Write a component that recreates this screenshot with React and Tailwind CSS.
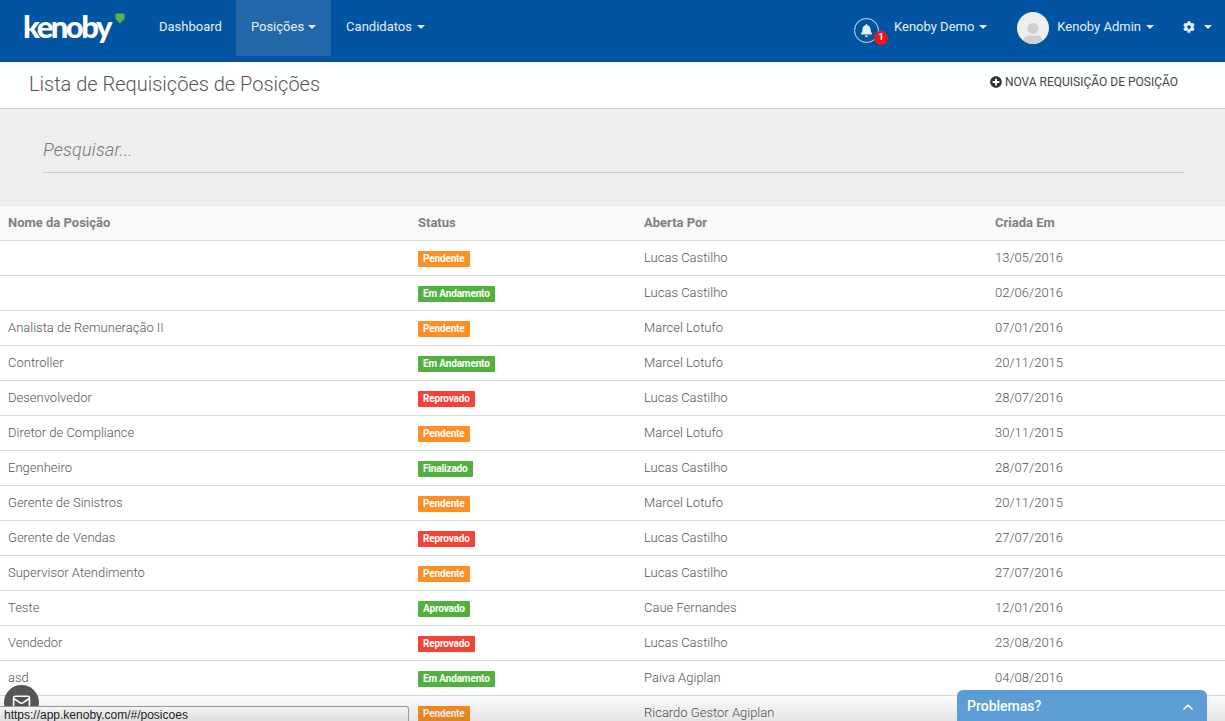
import { ChevronUp, Mail } from 'lucide-react';
import { FaBell, FaCog, FaPlusCircle, FaUser } from 'react-icons/fa';

const STATUS_STYLES = {
  Pendente: 'bg-[#fd8f25]',
  'Em Andamento': 'bg-[#52b03f]',
  Reprovado: 'bg-[#f44336]',
  Finalizado: 'bg-[#52b03f]',
  Aprovado: 'bg-[#52b03f]',
};

const ROWS = [
  ['', 'Pendente', 'Lucas Castilho', '13/05/2016'],
  ['', 'Em Andamento', 'Lucas Castilho', '02/06/2016'],
  ['Analista de Remuneração II', 'Pendente', 'Marcel Lotufo', '07/01/2016'],
  ['Controller', 'Em Andamento', 'Marcel Lotufo', '20/11/2015'],
  ['Desenvolvedor', 'Reprovado', 'Lucas Castilho', '28/07/2016'],
  ['Diretor de Compliance', 'Pendente', 'Marcel Lotufo', '30/11/2015'],
  ['Engenheiro', 'Finalizado', 'Lucas Castilho', '28/07/2016'],
  ['Gerente de Sinistros', 'Pendente', 'Marcel Lotufo', '20/11/2015'],
  ['Gerente de Vendas', 'Reprovado', 'Lucas Castilho', '27/07/2016'],
  ['Supervisor Atendimento', 'Pendente', 'Lucas Castilho', '27/07/2016'],
  ['Teste', 'Aprovado', 'Caue Fernandes', '12/01/2016'],
  ['Vendedor', 'Reprovado', 'Lucas Castilho', '23/08/2016'],
  ['asd', 'Em Andamento', 'Paiva Agiplan', '04/08/2016'],
  ['', 'Pendente', 'Ricardo Gestor Agiplan', ''],
];

const COLS = 'grid grid-cols-[410px_226px_351px_1fr]';

function Caret({ className = 'ml-[5px]' }) {
  return <span className={`inline-block border-x-[4px] border-t-[4px] border-x-transparent border-t-current align-middle ${className}`} />;
}

function NavLink({ children, active, caret, className = '' }) {
  return (
    <a className={`flex h-[56px] items-center pb-[3px] text-[13px] text-[#e6eef7] ${active ? 'bg-[#2268a8]' : ''} ${className}`}>
      {children}
      {caret && <Caret />}
    </a>
  );
}

function Logo() {
  return (
    <div className="relative ml-[23px] flex h-[56px] w-[121px] items-center pb-[4px]">
      <span className="text-[31px] font-black leading-none tracking-[-2.5px] text-white [font-family:Lato,sans-serif]">kenoby</span>
      <svg className="absolute left-[92px] top-[13px]" width="10" height="11" viewBox="0 0 10 11">
        <path d="M0.5 0.5H9.5V6L5 10.5L0.5 6Z" fill="#5cb34a" />
      </svg>
    </div>
  );
}

function Row({ name, status, owner, date }) {
  return (
    <div className={`${COLS} h-[35px] items-center border-t border-[#dcdcdc] text-[13px] font-light text-[#555]`}>
      <div className="pl-2">{name}</div>
      <div className="pl-2">
        <span className={`mt-[2px] inline-flex h-[16px] items-center rounded-[1px] px-[5px] text-[10px] font-bold tracking-[-0.15px] text-white ${STATUS_STYLES[status]}`}>
          {status}
        </span>
      </div>
      <div className="pl-2">{owner}</div>
      <div className="pl-2">{date}</div>
    </div>
  );
}

export default function App() {
  return (
    <div className="relative h-[721px] overflow-hidden bg-white [font-family:Roboto,sans-serif]">
      <nav className="flex h-[62px] bg-[#0054a2]">
        <Logo />
        <NavLink className="pl-[15px] pr-[14px]">Dashboard</NavLink>
        <NavLink active caret className="pl-[15px] pr-[15px] [&>span]:ml-[4px]">Posições</NavLink>
        <NavLink caret className="px-[15px]">Candidatos</NavLink>
        <div className="ml-auto flex h-[56px] items-center">
          <div className="relative mr-[15px] mt-[4px] flex h-[25px] w-[25px] items-center justify-center rounded-full border border-[#dbe6f2]">
            <FaBell size={13} color="#e6eef7" />
            <span className="absolute left-[19px] top-[12px] flex h-[14px] w-[14px] items-center justify-center rounded-full bg-[#f0141e] text-[9px] font-bold text-white">1</span>
          </div>
          <NavLink caret className="mr-[30px]">Kenoby Demo</NavLink>
          <div className="mr-[8px] flex h-[32px] w-[32px] items-end justify-center overflow-hidden rounded-full bg-[#eeeeee]">
            <FaUser size={22} color="#cfcfcf" className="mb-[-1px]" />
          </div>
          <NavLink caret className="mr-[29px]">Kenoby Admin</NavLink>
          <div className="flex items-center pb-[3px] text-[#e6eef7]">
            <FaCog size={12} />
            <Caret className="ml-[9px] mr-[13px]" />
          </div>
        </div>
      </nav>

      <header className="flex h-[47px] items-center justify-between border-b border-[#cfcfcf] bg-white pb-[2px] pl-[29px] pr-[47px] shadow-[0_1px_2px_rgba(0,0,0,0.12)]">
        <h1 className="text-[20px] font-light text-[#555]">Lista de Requisições de Posições</h1>
        <a className="mb-[4px] flex items-center gap-[3px] text-[12px] text-[#444]">
          <FaPlusCircle size={12} color="#333" />
          NOVA REQUISIÇÃO DE POSIÇÃO
        </a>
      </header>

      <div className="h-[97px] bg-[#eeeeee] pl-[43px] pr-[41px] pt-[27px]">
        <div className="h-[37px] border-b border-[#cccccc] text-[18px] font-light leading-[27px] italic tracking-[0.2px] text-[#777]">Pesquisar...</div>
      </div>

      <div className={`${COLS} h-[34px] items-center bg-[#f9f9f9] text-[13px] font-bold text-[#808080]`}>
        <div className="pl-2">Nome da Posição</div>
        <div className="pl-2">Status</div>
        <div className="pl-2">Aberta Por</div>
        <div className="pl-2">Criada Em</div>
      </div>

      {ROWS.map(([name, status, owner, date], i) => (
        <Row key={i} name={name} status={status} owner={owner} date={date} />
      ))}

      <div className="absolute bottom-0 left-0 right-0 h-[32px] bg-gradient-to-b from-transparent to-black/10" />

      <div className="absolute left-[4px] top-[685px] flex h-[35px] w-[35px] justify-center rounded-full bg-[#555] pt-[8px]">
        <Mail size={19} stroke="#fff" />
      </div>

      <div className="absolute bottom-0 left-0 h-[15px] w-[409px] rounded-tr-[3px] border border-b-0 border-l-0 border-[#999] bg-gradient-to-b from-[#f4f4f4] to-[#dedede] pl-[4px] text-[12px] leading-[16px] text-[#222] [font-family:'Liberation_Sans',sans-serif]">
        https://app.kenoby.com/#/posicoes
      </div>

      <div className="absolute bottom-0 left-[957px] flex h-[31px] w-[250px] items-center justify-between rounded-t-[6px] bg-[#5b9dd4] pl-[10px] pr-[11px] pt-[2px] text-[14px] font-medium text-white">
        Problemas?
        <ChevronUp size={16} strokeWidth={2.5} />
      </div>
    </div>
  );
}
